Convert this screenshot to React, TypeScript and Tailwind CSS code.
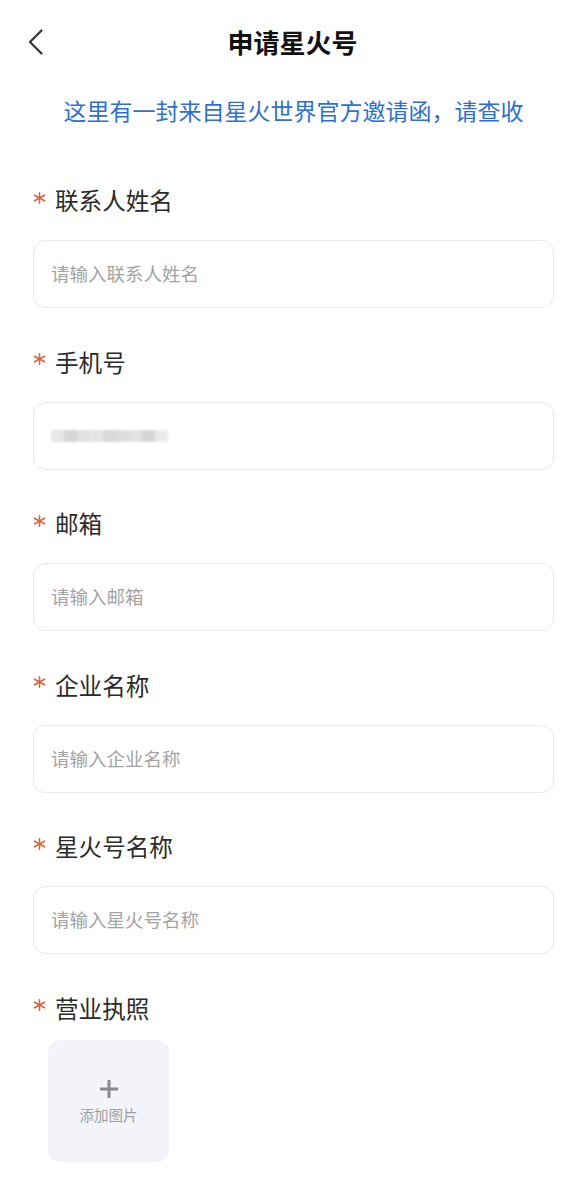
import React from "react";

const fields = [
  { label: "联系人姓名", placeholder: "请输入联系人姓名" },
  { label: "手机号", placeholder: "", blurred: true },
  { label: "邮箱", placeholder: "请输入邮箱" },
  { label: "企业名称", placeholder: "请输入企业名称" },
  { label: "星火号名称", placeholder: "请输入星火号名称" },
];

function Label({ text }: { text: string }) {
  return (
    <div className="flex items-center h-[32px]">
      <span className="w-[22px] h-[32px] flex items-center">
        <svg width="13" height="12" viewBox="0 0 13 12" className="-mt-[5px]">
          <g stroke="#d8653c" strokeWidth="1.6" strokeLinecap="round">
            <line x1="6.5" y1="0.8" x2="6.5" y2="11.2" />
            <line x1="1.5" y1="3.2" x2="11.5" y2="8.8" />
            <line x1="1.5" y1="8.8" x2="11.5" y2="3.2" />
          </g>
        </svg>
      </span>
      <span className="text-[23.6px] leading-[32px] text-[#2b2b2b]">{text}</span>
    </div>
  );
}

function BlurredPhone() {
  const blocks = ["#e4e4e4", "#d3d3d3", "#dedede", "#e2e2e2", "#d5d5d5", "#dadada", "#e0e0e0", "#d2d2d2", "#e8e8e8"];
  return (
    <div className="flex h-[12px] blur-[1px] opacity-90">
      {blocks.map((c, i) => (
        <div key={i} className="w-[13px] h-[12px]" style={{ backgroundColor: c }} />
      ))}
    </div>
  );
}

export default function App() {
  return (
    <div
      className="w-[575px] min-h-[1201px] bg-white"
      style={{ fontFamily: '"Noto Sans CJK SC", "Noto Sans", sans-serif' }}
    >
      <div className="h-[84px] grid grid-cols-[86px_1fr_76px] items-center">
        <div className="pl-[28px] flex items-center">
          <svg width="16" height="26" viewBox="0 0 16 26">
            <path d="M13.5 1.5 L2 13 L13.5 24.5" fill="none" stroke="#333" strokeWidth="2.2" strokeLinecap="round" strokeLinejoin="round" />
          </svg>
        </div>
        <div className="text-center text-[26px] font-bold text-[#111] leading-[32px]">申请星火号</div>
        <div />
      </div>
      <div className="pt-[10px] pl-[12px] text-center text-[23px] leading-[32px] text-[#2f6fd3]">
        这里有一封来自星火世界官方邀请函，请查收
      </div>
      <div className="pl-[33px] pr-[21px] pt-[58px]">
        {fields.map((f) => (
          <div key={f.label} className="pb-[37.5px]">
            <Label text={f.label} />
            <div className="mt-[24px] h-[68px] rounded-[12px] border border-[#ebebeb] bg-white flex items-center px-[17px]">
              {f.blurred ? (
                <BlurredPhone />
              ) : (
                <span className="text-[18.5px] text-[#a3a3a3]">{f.placeholder}</span>
              )}
            </div>
          </div>
        ))}
        <Label text="营业执照" />
        <div className="mt-[16px] ml-[15px] w-[121px] h-[122px] rounded-[12px] bg-[#f2f4f9] flex flex-col items-center justify-center">
          <svg width="20" height="20" viewBox="0 0 20 20" className="mt-[2px]">
            <path d="M10 1 V19 M1 10 H19" stroke="#8a8a8a" strokeWidth="3" />
          </svg>
          <span className="mt-[6px] text-[14.5px] leading-[20px] text-[#a0a0a0]">添加图片</span>
        </div>
      </div>
    </div>
  );
}
